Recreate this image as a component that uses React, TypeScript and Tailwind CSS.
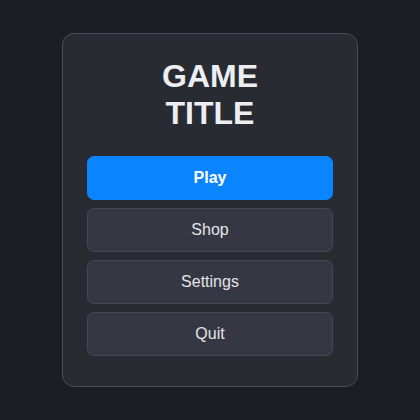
export default function App() {
  const items = ["Shop", "Settings", "Quit"];
  return (
    <div
      className="w-[420px] h-[420px] bg-[#1d1e23] flex items-center justify-center"
      style={{ fontFamily: '"Liberation Sans", Arial, sans-serif' }}
    >
      <div className="w-[296px] h-[354px] bg-[#292b33] border border-[#4a4d57] rounded-[12px] px-6 pt-6 pb-[30px] flex flex-col">
        <h1 className="text-[32px] leading-[1.15] font-bold text-[#eceef2] text-center mb-6">
          GAME
          <br />
          TITLE
        </h1>
        <div className="flex flex-col gap-2">
          <button className="h-11 rounded-[7px] bg-[#0a84ff] border border-[#0a84ff] text-white font-bold text-base">
            Play
          </button>
          {items.map((t) => (
            <button
              key={t}
              className="h-11 rounded-[7px] bg-[#353843] border border-[#454854] text-[#e3e4e8] text-base"
            >
              {t}
            </button>
          ))}
        </div>
      </div>
    </div>
  );
}
